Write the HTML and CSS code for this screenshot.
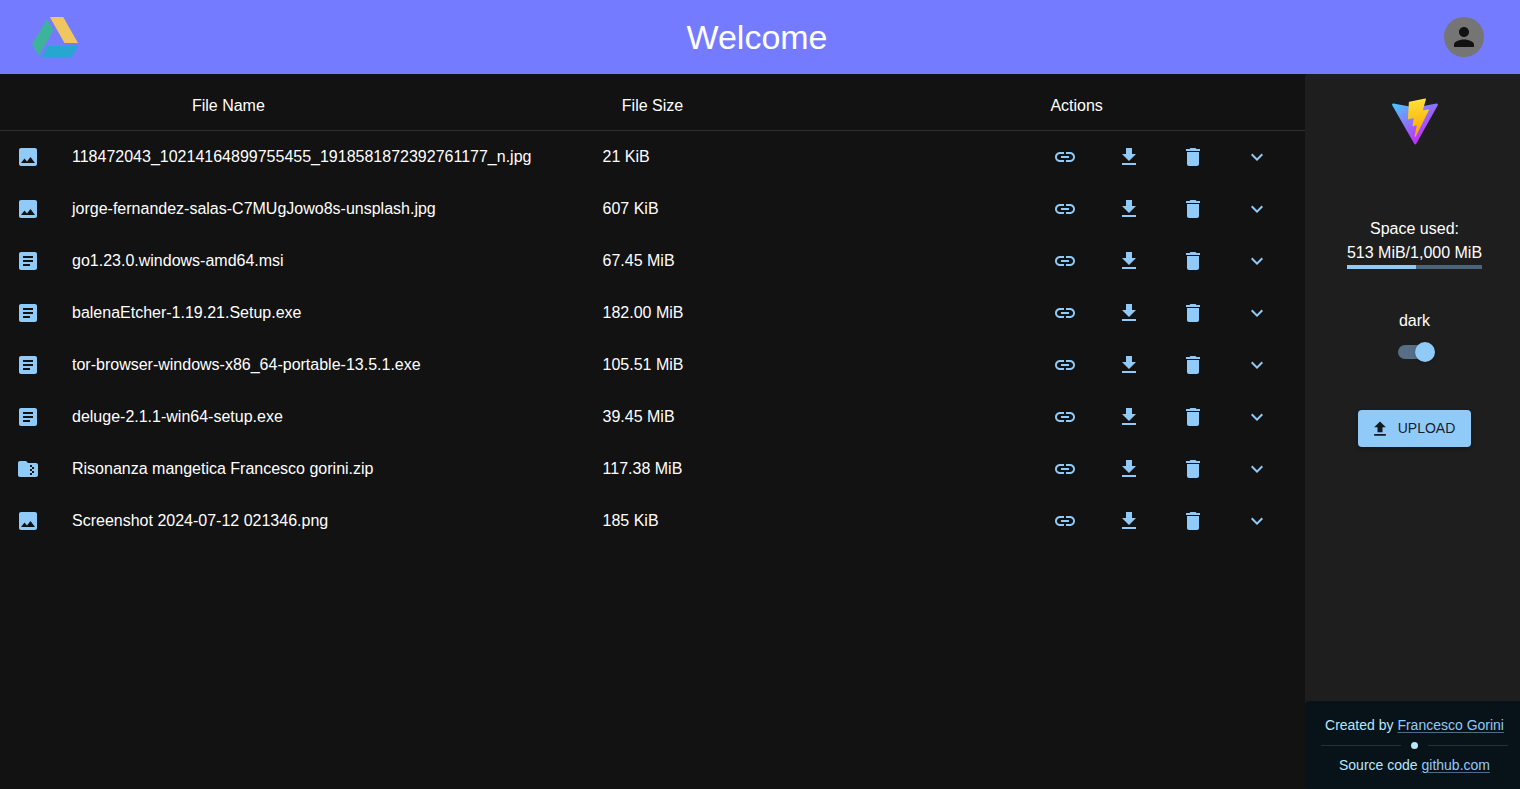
FILE: index.html
```html
<!DOCTYPE html>
<html lang="en">
<head>
<meta charset="utf-8">
<title>Drive</title>
<link rel="stylesheet" href="styles.css">
</head>
<body>
<svg class="sprite" aria-hidden="true">
  <symbol id="i-image" viewBox="0 0 24 24"><path d="M21 19V5c0-1.100-.9-2-2-2H5c-1.100 0-2 .9-2 2v14c0 1.100.9 2 2 2h14c1.100 0 2-.9 2-2zM8.500 13.500l2.500 3.010L14.500 12l4.500 6H5l3.500-4.500z"/></symbol>
  <symbol id="i-doc" viewBox="0 0 24 24"><path d="M19 3H5c-1.100 0-2 .9-2 2v14c0 1.100.9 2 2 2h14c1.100 0 2-.9 2-2V5c0-1.100-.9-2-2-2zm-5 14H7v-2h7v2zm3-4H7v-2h10v2zm0-4H7V7h10v2z"/></symbol>
  <symbol id="i-zip" viewBox="0 0 24 24"><path d="M20 6h-8l-2-2H4c-1.100 0-2 .9-2 2v12c0 1.100.9 2 2 2h16c1.100 0 2-.9 2-2V8c0-1.100-.9-2-2-2zm-2 6h-2v2h2v2h-2v2h-2v-2h2v-2h-2v-2h2v-2h-2V8h2v2h2v2z"/></symbol>
  <symbol id="i-link" viewBox="0 0 24 24"><path d="M3.900 12c0-1.710 1.390-3.100 3.100-3.100h4V7H7c-2.760 0-5 2.240-5 5s2.240 5 5 5h4v-1.900H7c-1.710 0-3.100-1.390-3.100-3.100zM8 13h8v-2H8v2zm9-6h-4v1.900h4c1.710 0 3.100 1.390 3.100 3.100s-1.390 3.100-3.100 3.100h-4V17h4c2.760 0 5-2.240 5-5s-2.240-5-5-5z"/></symbol>
  <symbol id="i-download" viewBox="0 0 24 24"><path d="M19 9h-4V3H9v6H5l7 7 7-7zM5 18v2h14v-2H5z"/></symbol>
  <symbol id="i-trash" viewBox="0 0 24 24"><path d="M6 19c0 1.100.9 2 2 2h8c1.100 0 2-.9 2-2V7H6v12zM19 4h-3.500l-1-1h-5l-1 1H5v2h14V4z"/></symbol>
  <symbol id="i-more" viewBox="0 0 24 24"><path d="M16.590 8.590 12 13.170 7.410 8.590 6 10l6 6 6-6z"/></symbol>
  <symbol id="i-upload" viewBox="0 0 24 24"><path d="M5 20h14v-2H5v2zm0-10h4v6h6v-6h4l-7-7-7 7z"/></symbol>
  <symbol id="i-person" viewBox="0 0 24 24"><path d="M12 12c2.210 0 4-1.790 4-4s-1.790-4-4-4-4 1.790-4 4 1.790 4 4 4zm0 2c-2.670 0-8 1.340-8 4v2h16v-2c0-2.660-5.330-4-8-4z"/></symbol>
</svg>
<div class="app">
  <header class="topbar">
    <svg class="logo" viewBox="0 0 46 42" role="img" aria-label="Drive">
      <path fill="#3eb39b" d="M15 3 0 28.500 6.800 39.500 21.500 14.500z"/>
      <path fill="#f0c75e" d="M17.800 1H31.200L46 27H32.500z"/>
      <path fill="#26a6d1" d="M15.500 30H46L39.500 41.500H9.300z"/>
    </svg>
    <h1 class="title">Welcome</h1>
    <button class="account" aria-label="Account"><span class="avatar"><svg viewBox="0 0 24 24"><use href="#i-person"/></svg></span></button>
  </header>
  <div class="content">
    <main class="files">
      <table class="table">
        <thead><tr class="head-row"><th>File Name</th><th>File Size</th><th>Actions</th></tr></thead>
        <tbody id="rows"></tbody>
      </table>
    </main>
    <aside class="sidebar">
      <div class="panel">
        <svg class="vite" viewBox="0 0 410 404" role="img" aria-label="Vite">
          <defs>
            <linearGradient id="g1" x1="6" y1="33" x2="235" y2="344" gradientUnits="userSpaceOnUse"><stop stop-color="#41d1ff"/><stop offset="1" stop-color="#bd34fe"/></linearGradient>
            <linearGradient id="g2" x1="194.651" y1="8.818" x2="236.076" y2="292.989" gradientUnits="userSpaceOnUse"><stop stop-color="#ffea83"/><stop offset=".083" stop-color="#ffdd35"/><stop offset="1" stop-color="#ffa800"/></linearGradient>
          </defs>
          <path fill="url(#g1)" d="M399.641 59.525 215.643 388.545C211.844 395.338 202.084 395.378 198.228 388.618L10.582 59.556C6.381 52.190 12.680 43.267 21.028 44.759L205.223 77.682C206.398 77.892 207.601 77.890 208.776 77.676L389.119 44.806C397.439 43.289 403.768 52.143 399.641 59.525z"/>
          <path fill="url(#g2)" d="M292.965 1.574 156.801 28.255C154.563 28.694 152.906 30.590 152.771 32.866L144.395 174.330C144.198 177.662 147.258 180.248 150.510 179.498L188.420 170.749C191.967 169.931 195.172 173.055 194.443 176.622L183.180 231.775C182.422 235.487 185.907 238.661 189.532 237.560L212.947 230.446C216.577 229.344 220.065 232.527 219.297 236.242L201.398 322.875C200.278 328.294 207.486 331.249 210.492 326.603L212.500 323.500 323.454 102.072C325.312 98.365 322.108 94.137 318.036 94.923L279.014 102.454C275.347 103.161 272.227 99.746 273.262 96.158L298.731 7.867C299.767 4.273 296.636.855 292.965 1.574z"/>
        </svg>
        <div class="usage">
          <span>Space used:</span>
          <span>513 MiB/1,000 MiB</span>
          <div class="bar" role="progressbar" aria-valuenow="513" aria-valuemax="1000" aria-label="Space used"><div class="bar-fill" style="width:51.3%"></div></div>
        </div>
        <div class="theme">
          <label for="dark">dark</label>
          <input class="switch" id="dark" type="checkbox" role="switch" checked>
        </div>
        <button class="upload"><svg viewBox="0 0 24 24"><use href="#i-upload"/></svg>UPLOAD</button>
      </div>
      <footer class="credits">
        <p>Created by <a href="#">Francesco Gorini</a></p>
        <div class="divider"><span class="dot"></span></div>
        <p>Source code <a href="#">github.com</a></p>
      </footer>
    </aside>
  </div>
</div>
<script src="app.js"></script>
</body>
</html>
```
FILE: styles.css
```css
* { box-sizing: border-box; }

body {
  margin: 0;
  background: #121212;
  color: #fff;
  font: 16px/24px "Liberation Sans", Arial, sans-serif;
}

button {
  border: 0;
  background: none;
  font: inherit;
  color: inherit;
  cursor: pointer;
}

svg { display: block; fill: currentColor; }

.sprite { position: absolute; width: 0; height: 0; }

.app { display: flex; flex-direction: column; min-height: 100vh; }

.topbar {
  display: flex;
  align-items: center;
  justify-content: space-between;
  padding: 9px 28px 9px 32px;
  background: #747bff;
}

.logo { width: 46px; height: 42px; }

.title { margin: 0; font-size: 34px; line-height: 42px; font-weight: 400; }

.account { padding: 8px; }

.avatar {
  display: grid;
  place-items: center;
  width: 40px;
  height: 40px;
  border-radius: 50%;
  background: #757575;
  color: #121212;
}

.avatar svg { width: 30px; height: 30px; }

.content { flex: 1; display: flex; }

.files { flex: 1; min-width: 0; }

.table, .table tbody, .table thead { display: block; width: 100%; }

.table th { font-weight: 400; padding: 0; }

.table td { padding: 0; }

.head-row {
  display: grid;
  grid-template-columns: 35fr 30fr 35fr;
  padding: 20px 0 12px;
  border-bottom: 1px solid #2e2e2e;
}

.row {
  display: grid;
  grid-template-columns: 56px 53fr 43fr auto;
  align-items: center;
  height: 52px;
  padding: 0 16px;
}

.type, .action { color: #90caf9; }

.type svg, .action svg { width: 24px; height: 24px; }

.actions { display: flex; }

.action { padding: 8px 20px; }

.sidebar {
  display: flex;
  flex-direction: column;
  justify-content: space-between;
  width: 215px;
  border-radius: 4px 0 0 4px;
  background: #1e1e1e;
}

.panel {
  display: flex;
  flex-direction: column;
  align-items: center;
  padding: 24px 12px 24px 16px;
}

.vite { width: 48px; height: 48px; }

.usage {
  display: flex;
  flex-direction: column;
  align-items: center;
  margin-top: 71px;
}

.bar { width: 100%; height: 4px; background: #4b647a; }

.bar-fill { height: 100%; background: #90caf9; }

.theme {
  display: flex;
  flex-direction: column;
  align-items: center;
  gap: 12px;
  margin-top: 40px;
}

.switch {
  appearance: none;
  display: flex;
  align-items: center;
  width: 34px;
  height: 14px;
  margin: 0;
  border-radius: 7px;
  background: #576f86;
}

.switch::before {
  content: "";
  flex: none;
  width: 20px;
  height: 20px;
  border-radius: 50%;
  background: #fff;
  box-shadow: 0 1px 3px rgba(0, 0, 0, .3);
}

.switch:checked::before { margin-left: 17px; background: #90caf9; }

.upload {
  display: flex;
  align-items: center;
  gap: 8px;
  margin-top: 51px;
  padding: 6px 16px 6px 12px;
  border-radius: 4px;
  background: #90caf9;
  color: rgba(0, 0, 0, .87);
  font-size: 14px;
  line-height: 25px;
  box-shadow: 0 2px 4px rgba(0, 0, 0, .3);
}

.upload svg { width: 20px; height: 20px; }

.credits {
  padding: 14px 12px 14px 16px;
  border-radius: 4px 0 0 4px;
  background: #071318;
  color: #b8e7fb;
  font-size: 14px;
  line-height: 20px;
  text-align: center;
  white-space: nowrap;
}

.credits p { margin: 0; }

.credits a {
  color: #90caf9;
  text-decoration-color: #4b6f8a;
  text-underline-offset: 2px;
}

.divider { display: flex; align-items: center; height: 20px; gap: 10px; }

.divider::before, .divider::after {
  content: "";
  flex: 1;
  height: 1px;
  background: #253035;
}

.dot { width: 7px; height: 7px; border-radius: 50%; background: #b8e7fb; }
```
FILE: app.js
```js
const files = [
  ["image", "118472043_10214164899755455_1918581872392761177_n.jpg", "21 KiB"],
  ["image", "jorge-fernandez-salas-C7MUgJowo8s-unsplash.jpg", "607 KiB"],
  ["doc", "go1.23.0.windows-amd64.msi", "67.45 MiB"],
  ["doc", "balenaEtcher-1.19.21.Setup.exe", "182.00 MiB"],
  ["doc", "tor-browser-windows-x86_64-portable-13.5.1.exe", "105.51 MiB"],
  ["doc", "deluge-2.1.1-win64-setup.exe", "39.45 MiB"],
  ["zip", "Risonanza mangetica Francesco gorini.zip", "117.38 MiB"],
  ["image", "Screenshot 2024-07-12 021346.png", "185 KiB"]
];

const actions = [["link", "Copy link"], ["download", "Download"], ["trash", "Delete"], ["more", "Details"]];

const icon = (name) => `<svg viewBox="0 0 24 24"><use href="#i-${name}"/></svg>`;

document.getElementById("rows").innerHTML = files.map(([type, name, size]) => `
  <tr class="row">
    <td class="type">${icon(type)}</td>
    <td>${name}</td>
    <td>${size}</td>
    <td class="actions">${actions.map(([id, label]) => `<button class="action" aria-label="${label}">${icon(id)}</button>`).join("")}</td>
  </tr>`).join("");
```
